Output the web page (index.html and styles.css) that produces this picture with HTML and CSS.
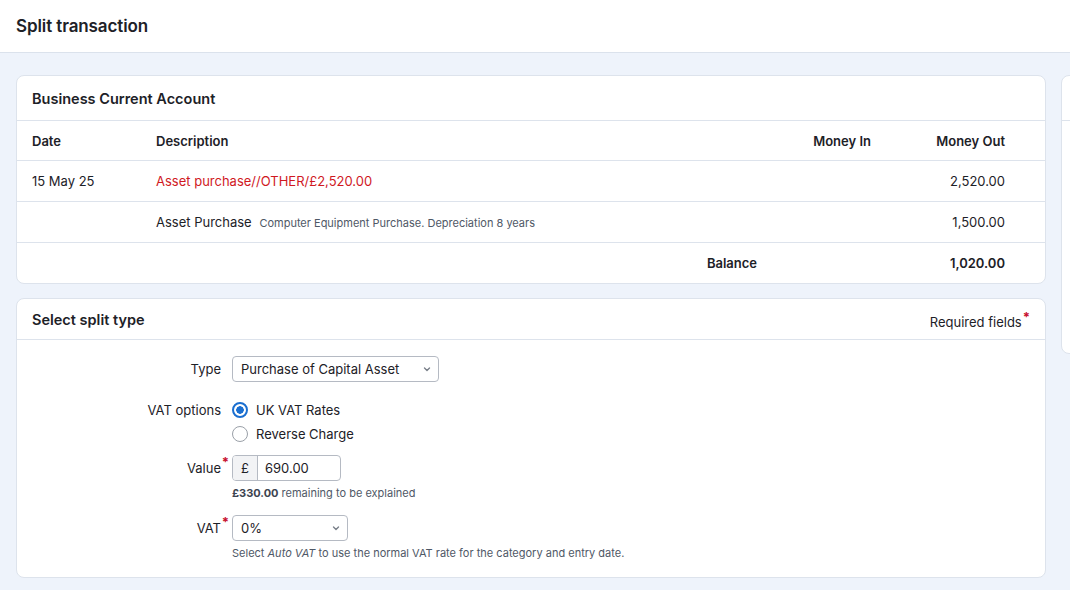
FILE: index.html
```html
<!DOCTYPE html>
<html lang="en">
<head>
    <meta charset="UTF-8">
    <title>Split transaction</title>
    <link rel="stylesheet" href="styles.css">
</head>
<body>
    <header class="page-header">
        <h1>Split transaction</h1>
    </header>

    <main class="page-main">
        <div class="main-col">
            <section class="card">
                <div class="card-title">Business Current Account</div>
                <table class="txn-table">
                    <colgroup>
                        <col class="col-date">
                        <col class="col-desc">
                        <col class="col-in">
                        <col class="col-out">
                    </colgroup>
                    <thead>
                        <tr>
                            <th>Date</th>
                            <th>Description</th>
                            <th class="num">Money In</th>
                            <th class="num">Money Out</th>
                        </tr>
                    </thead>
                    <tbody>
                        <tr>
                            <td>15 May 25</td>
                            <td class="desc-red">Asset purchase//OTHER/£2,520.00</td>
                            <td class="num"></td>
                            <td class="num">2,520.00</td>
                        </tr>
                        <tr>
                            <td></td>
                            <td>Asset Purchase <span class="desc-note">Computer Equipment Purchase. Depreciation 8 years</span></td>
                            <td class="num"></td>
                            <td class="num">1,500.00</td>
                        </tr>
                        <tr class="balance-row">
                            <td></td>
                            <td class="num">Balance</td>
                            <td></td>
                            <td class="num">1,020.00</td>
                        </tr>
                    </tbody>
                </table>
            </section>

            <section class="card">
                <div class="card-title split-title">
                    <span>Select split type</span>
                    <span class="required-note">Required fields<span class="req">*</span></span>
                </div>
                <div class="form-body">
                    <div class="form-row row-type">
                        <label class="form-label">Type</label>
                        <div class="form-control">
                            <div class="select select-wide">
                                <span>Purchase of Capital Asset</span>
                                <svg width="10" height="10" viewBox="0 0 10 10"><path d="M2.5 4 L5 6.5 L7.5 4" fill="none" stroke="#7a808a" stroke-width="1.4" stroke-linecap="round" stroke-linejoin="round"/></svg>
                            </div>
                        </div>
                    </div>

                    <div class="form-row row-vat-options">
                        <label class="form-label label-top">VAT options</label>
                        <div class="form-control">
                            <div class="radio-line"><span class="radio checked"></span>UK VAT Rates</div>
                            <div class="radio-line"><span class="radio"></span>Reverse Charge</div>
                        </div>
                    </div>

                    <div class="form-row row-value">
                        <label class="form-label label-top label-field">Value<span class="req req-label">*</span></label>
                        <div class="form-control">
                            <div class="input-group">
                                <span class="addon">£</span>
                                <span class="input-text">690.00</span>
                            </div>
                            <div class="help-text"><strong>£330.00</strong> remaining to be explained</div>
                        </div>
                    </div>

                    <div class="form-row row-vat">
                        <label class="form-label label-top label-field">VAT<span class="req req-label">*</span></label>
                        <div class="form-control">
                            <div class="select select-small">
                                <span>0%</span>
                                <svg width="10" height="10" viewBox="0 0 10 10"><path d="M2.5 4 L5 6.5 L7.5 4" fill="none" stroke="#7a808a" stroke-width="1.4" stroke-linecap="round" stroke-linejoin="round"/></svg>
                            </div>
                            <div class="help-text">Select <em>Auto VAT</em> to use the normal VAT rate for the category and entry date.</div>
                        </div>
                    </div>
                </div>
            </section>
        </div>

        <aside class="side-col">
            <section class="card side-card">
                <div class="card-title"></div>
            </section>
        </aside>
    </main>
</body>
</html>
```

FILE: styles.css
```css
/* Split transaction page */
html, body {
    overflow: hidden;
}

body {
    margin: 0;
    font-family: 'Inter', 'Liberation Sans', sans-serif;
    font-size: 13px;
    color: #1d2127;
    background-color: #eef3fb;
}

.page-header {
    background-color: #fff;
    height: 52px;
    border-bottom: 1px solid #dbe2ec;
    display: flex;
    align-items: center;
    padding: 0 16px;
}

.page-header h1 {
    margin: 0;
    font-size: 17px;
    font-weight: 600;
    letter-spacing: -0.1px;
}

.page-main {
    display: grid;
    grid-template-columns: 1030px 300px;
    gap: 15px;
    padding: 22px 16px;
    align-items: start;
    width: 1400px;
}

.main-col {
    display: flex;
    flex-direction: column;
    gap: 14px;
}

.card {
    background-color: #fff;
    border: 1px solid #dde3ec;
    border-radius: 8px;
    overflow: hidden;
}

.card-title {
    height: 44px;
    display: flex;
    align-items: center;
    padding: 0 15px;
    font-weight: 600;
    font-size: 14.5px;
    border-bottom: 1px solid #dde3ec;
}

.split-title {
    height: 40px;
    justify-content: space-between;
}

.required-note {
    font-weight: 400;
    font-size: 13px;
}

.req {
    color: #c8102e;
    font-weight: 700;
    font-size: 13px;
    vertical-align: 5px;
    margin-left: 1px;
}

/* transaction table */
.txn-table {
    width: 100%;
    border-collapse: collapse;
    table-layout: fixed;
}

.col-date { width: 124px; }
.col-in { width: 114px; }
.col-out { width: 159px; }

.txn-table th,
.txn-table td {
    padding: 0 15px;
    text-align: left;
    height: 40px;
    border-bottom: 1px solid #dde3ec;
    white-space: nowrap;
}

.txn-table th {
    font-weight: 600;
    height: 39px;
}

.txn-table tr:last-child td {
    border-bottom: none;
}

.txn-table .num {
    text-align: right;
}

.txn-table th:last-child,
.txn-table td:last-child {
    padding-right: 40px;
}

.desc-red {
    color: #d0191f;
}

.desc-note {
    font-size: 11px;
    color: #4f5866;
    margin-left: 4px;
}

.balance-row td {
    font-weight: 600;
}

/* form */
.form-body {
    padding: 16px 0 16px;
}

.form-row {
    display: grid;
    grid-template-columns: 204px 1fr;
    gap: 11px;
}

.row-type { margin-bottom: 16px; }
.row-vat-options { margin-bottom: 9px; }
.row-value { margin-bottom: 14px; }

.form-label {
    text-align: right;
    align-self: center;
}

.label-top {
    align-self: start;
    line-height: 24px;
}

.label-field {
    position: relative;
    line-height: 26px;
}

.req-label {
    position: absolute;
    right: -8px;
    top: -6px;
}

.select {
    height: 26px;
    box-sizing: border-box;
    border: 1px solid #b5bac3;
    border-radius: 4px;
    display: flex;
    align-items: center;
    justify-content: space-between;
    padding: 0 6px 0 8px;
}

.select-wide { width: 207px; }
.select-small { width: 116px; }

.radio-line {
    display: flex;
    align-items: center;
    height: 24px;
    gap: 8px;
}

.radio {
    width: 16px;
    height: 16px;
    border: 1px solid #9aa0a8;
    border-radius: 50%;
    box-sizing: border-box;
}

.radio.checked {
    border: 2px solid #1b6fd0;
    background: radial-gradient(circle, #1b6fd0 0 3.5px, #fff 4px);
}

.input-group {
    display: flex;
    width: 109px;
    height: 26px;
    box-sizing: border-box;
    border: 1px solid #b5bac3;
    border-radius: 4px;
    overflow: hidden;
}

.addon {
    width: 24px;
    background-color: #f2f3f5;
    border-right: 1px solid #b5bac3;
    display: flex;
    align-items: center;
    justify-content: center;
}

.input-text {
    display: flex;
    align-items: center;
    padding-left: 7px;
}

.help-text {
    font-size: 11px;
    color: #4f5866;
    line-height: 16px;
    margin-top: 4px;
}

.help-text strong {
    font-weight: 700;
    color: #3d4450;
}

.side-card {
    height: 277px;
}
```
